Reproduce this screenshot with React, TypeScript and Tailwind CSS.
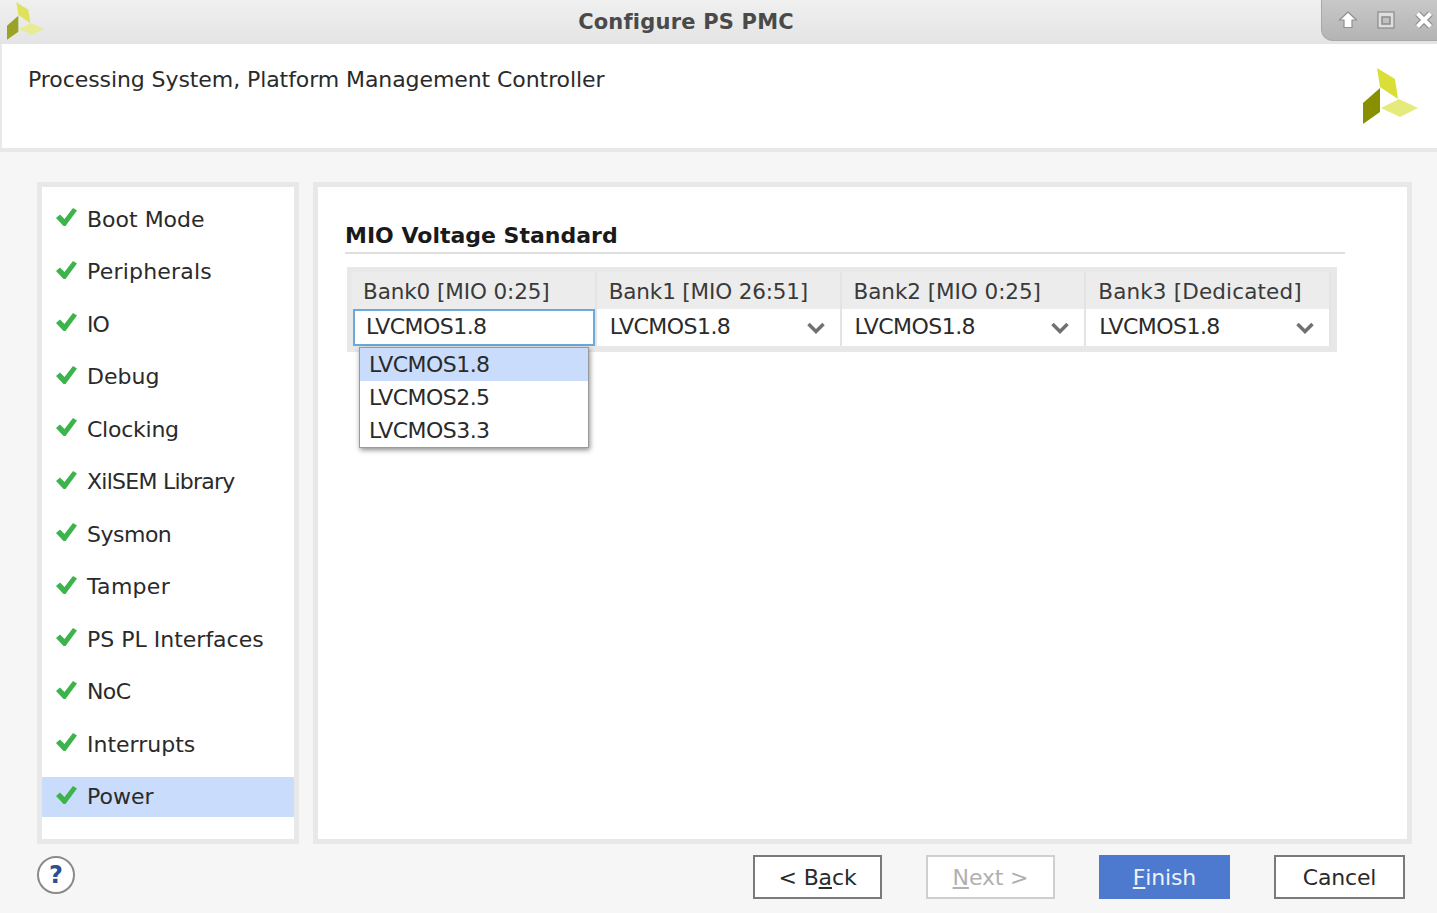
import React from 'react';

const steps = [
  { name: 'Boot Mode', tracking: 'tracking-normal' },
  { name: 'Peripherals', tracking: 'tracking-[0.2px]' },
  { name: 'IO', tracking: 'tracking-[-1px]' },
  { name: 'Debug', tracking: 'tracking-normal' },
  { name: 'Clocking', tracking: 'tracking-[-0.25px]' },
  { name: 'XilSEM Library', tracking: 'tracking-[-0.75px]' },
  { name: 'Sysmon', tracking: 'tracking-[-0.5px]' },
  { name: 'Tamper', tracking: 'tracking-[0.3px]' },
  { name: 'PS PL Interfaces', tracking: 'tracking-normal' },
  { name: 'NoC', tracking: 'tracking-[-0.6px]' },
  { name: 'Interrupts', tracking: 'tracking-normal' },
  { name: 'Power', tracking: 'tracking-normal' },
];

const banks = [
  { name: 'Bank0 [MIO 0:25]', focused: true, tracking: 'tracking-[-0.1px]' },
  { name: 'Bank1 [MIO 26:51]', focused: false, tracking: 'tracking-[-0.15px]' },
  { name: 'Bank2 [MIO 0:25]', focused: false, tracking: 'tracking-[-0.05px]' },
  { name: 'Bank3 [Dedicated]', focused: false, tracking: 'tracking-[0.15px]' },
];

const Logo: React.FC<{ faded?: boolean; className: string }> = ({ faded, className }) => (
  <svg viewBox="0 0 60 60" className={className}>
    <polygon points="17,2 35,13 38,33 20,21" fill={faded ? '#dfe25c' : '#d9df36'} />
    <polygon points="21,42 39,33 58,42 40,51" fill={faded ? '#e8eb94' : '#e5ea7c'} />
    <polygon points="20,22 3,37 3,58 20,46" fill={faded ? '#9ba224' : '#889000'} />
  </svg>
);

const Check = () => (
  <svg viewBox="0 0 22 20" className="w-[22px] h-5 shrink-0 -mt-[2px]">
    <polygon points="0,10 4,6.500 8.500,11 17,0 21,2.500 9.500,18 7.500,18" fill="#3cb44b" />
  </svg>
);

const Chevron = () => (
  <svg viewBox="0 0 18 12" className="w-[18px] h-3 shrink-0">
    <path d="M1.500 2 L9 9.500 L16.500 2" fill="none" stroke="#707070" strokeWidth="3.500" />
  </svg>
);

const WindowControls = () => (
  <div className="w-[116px] h-[41px] rounded-bl-[12px] border-l border-b border-[#a8a8a8] bg-gradient-to-b from-[#c8c8c8] to-[#b4b4b4] flex items-center pl-[16px] gap-[18px]">
    <svg viewBox="0 0 20 20" className="w-5 h-5 shrink-0">
      <path d="M10 2 L18.500 10 L14 10 L14 17.500 L6 17.500 L6 10 L1.500 10 Z" fill="#ffffff" stroke="#8f8f8f" strokeWidth="1.200" />
    </svg>
    <svg viewBox="0 0 20 20" className="w-5 h-5 shrink-0">
      <rect x="2" y="2" width="16" height="16" fill="#dedede" stroke="#8a8a8a" strokeWidth="1.200" />
      <rect x="6" y="7" width="8" height="7" fill="#c0c0c0" stroke="#8a8a8a" strokeWidth="1.500" />
    </svg>
    <svg viewBox="0 0 20 20" className="w-5 h-5 shrink-0">
      <path d="M3.500 3.500 L16.500 16.500 M16.500 3.500 L3.500 16.500" fill="none" stroke="#8f8f8f" strokeWidth="6.500" />
      <path d="M3.500 3.500 L16.500 16.500 M16.500 3.500 L3.500 16.500" fill="none" stroke="#ffffff" strokeWidth="4" />
    </svg>
  </div>
);

export default function App() {
  return (
    <div className="w-[1437px] h-[913px] overflow-hidden flex flex-col bg-[#f6f6f6] text-[#2a2a2a] font-['DejaVu_Sans',sans-serif] text-[22px]">
      {/* title bar */}
      <div className="h-[44px] shrink-0 flex items-start bg-gradient-to-b from-[#f0f0f0] to-[#e4e4e4]">
        <Logo faded className="w-[40px] h-[40px] shrink-0 ml-[5px] mt-[1px]" />
        <div className="flex-1 h-[44px] pt-[2px] flex items-center justify-center pl-[6px] font-bold text-[21px] tracking-[0.2px] text-[#4a4a4a]">Configure PS PMC</div>
        <WindowControls />
      </div>

      {/* header */}
      <div className="h-[108px] shrink-0 bg-white border-b-[4px] border-l-[2px] border-[#e8e8e8] flex justify-between pl-[26px] pr-[17px]">
        <div className="pt-[21px] leading-[30px] tracking-[-0.08px]">Processing System, Platform Management Controller</div>
        <Logo className="w-[60px] h-[60px] mt-[22px]" />
      </div>

      {/* body */}
      <div className="flex-1 flex flex-col pl-[37px] pr-[25px] pt-[30px]">
        <div className="h-[662px] flex gap-[14px]">
          <div className="w-[262px] border-[5px] border-[#e8e8e8] bg-white pt-[12px] flex flex-col gap-[12.5px]">
            {steps.map(step => (
              <div
                key={step.name}
                className={`h-10 shrink-0 flex items-center pl-[14px] gap-[9px] ${step.name === 'Power' ? 'bg-[#c9dcfb]' : ''}`}
              >
                <Check />
                <span className={step.tracking}>{step.name}</span>
              </div>
            ))}
          </div>

          <div className="flex-1 border-[5px] border-[#e8e8e8] bg-white pl-[27px] pr-[62px] pt-[32px]">
            <div className="h-[35px] border-b-2 border-[#dedede] font-bold text-[22px] leading-[33px] text-[#1a1a1a]">MIO Voltage Standard</div>
            <div className="w-[990px] ml-[2px] mt-[13px] bg-[#e8e8e8] pt-[5px] pb-[6px] pl-[5px] pr-[6px] flex gap-0 relative">
              {banks.map(bank => (
                <div key={bank.name} className="w-[245px] border-r-2 border-[#e4e4e4] last:border-r-0 flex flex-col">
                  <div className={`h-[37px] pt-[3px] bg-[#ececec] flex items-center text-[#3a3a3a] text-[21.500px] ${bank.tracking} ${bank.focused ? 'pl-[11px]' : 'pl-[12px]'}`}>{bank.name}</div>
                  {bank.focused ? (
                    <div className="h-[37px] pb-[2px] bg-white border-2 border-[#6ca9dc] ml-[1px] flex items-center pl-[11px] tracking-[-0.55px]">LVCMOS1.8</div>
                  ) : (
                    <div className="h-[37px] bg-white flex items-center justify-between pl-[13px] pr-[15px]">
                      <span className="pb-[2px] tracking-[-0.55px]">LVCMOS1.8</span>
                      <Chevron />
                    </div>
                  )}
                </div>
              ))}

              {/* open dropdown */}
              <div className="absolute left-[12px] top-[80px] w-[230px] h-[101px] bg-white border border-[#9a9a9a] shadow-[1px_2px_5px_rgba(0,0,0,0.45)] flex flex-col tracking-[-0.55px]">
                <div className="h-[33px] shrink-0 bg-[#c9dcfb] flex items-center pl-[9px]">LVCMOS1.8</div>
                <div className="h-[33px] shrink-0 flex items-center pl-[9px]">LVCMOS2.5</div>
                <div className="h-[33px] shrink-0 flex items-center pl-[9px]">LVCMOS3.3</div>
              </div>
            </div>
          </div>
        </div>

        {/* footer */}
        <div className="flex items-start justify-between mt-[11px] mr-[7px]">
          <div className="w-[38px] h-[38px] mt-[1px] rounded-full border-2 border-[#8a8a8a] bg-white flex items-center justify-center font-bold text-[24px] text-[#2d4f8e]">?</div>
          <div className="flex tracking-[-0.15px]">
            <div className="w-[129px] h-[44px] border-2 border-[#7a7a7a] bg-white flex items-center justify-center">&lt; B<u>a</u>ck</div>
            <div className="w-[129px] h-[44px] ml-[44px] border-2 border-[#cfcfcf] bg-white flex items-center justify-center text-[#b0b0b0]"><u>N</u>ext &gt;</div>
            <div className="w-[131px] h-[44px] ml-[44px] bg-[#4d7acf] flex items-center justify-center text-[#eef2fb]"><u>F</u>inish</div>
            <div className="w-[131px] h-[44px] ml-[44px] border-2 border-[#7a7a7a] bg-white flex items-center justify-center">Cancel</div>
          </div>
        </div>
      </div>
    </div>
  );
}
